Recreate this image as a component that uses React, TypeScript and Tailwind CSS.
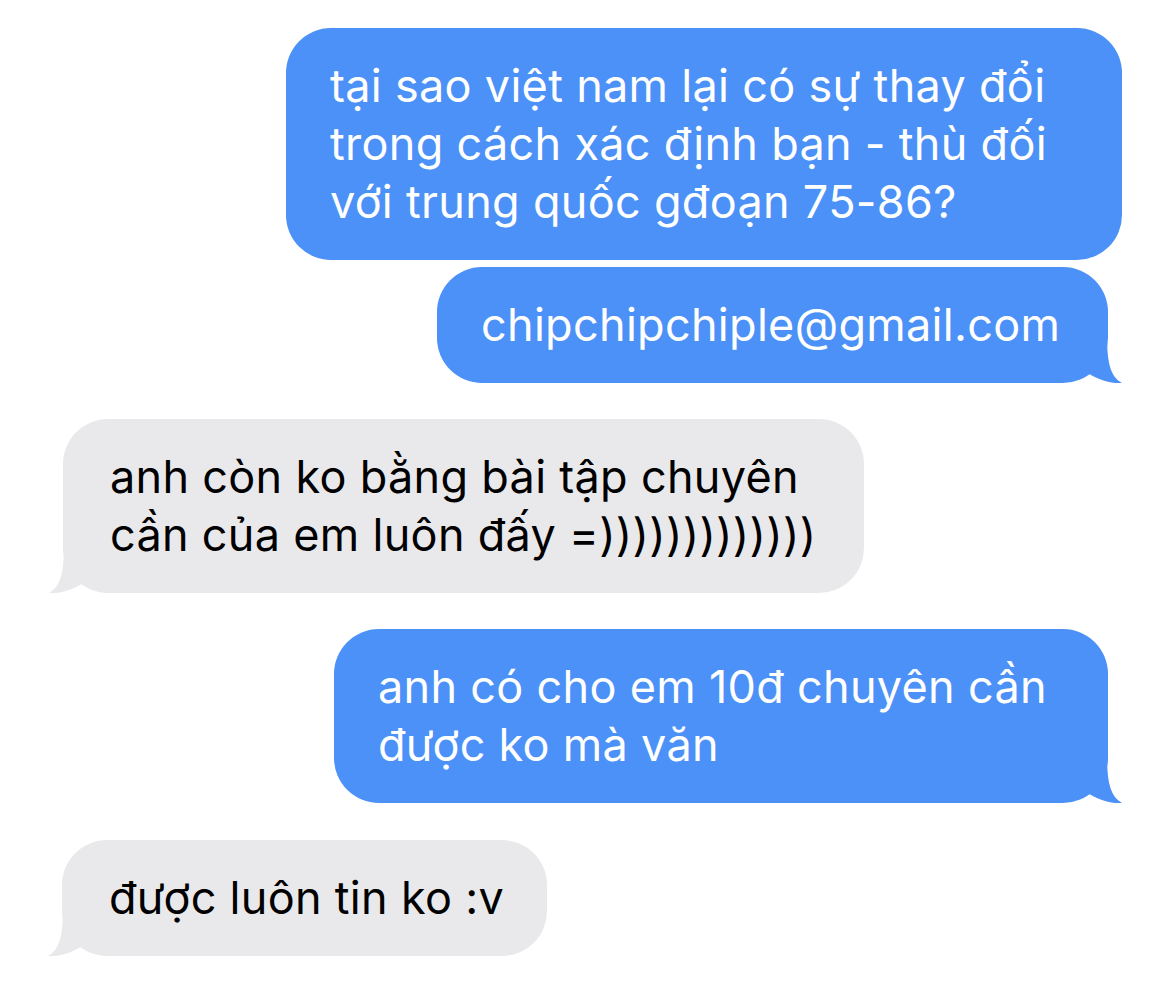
import React from "react";

/* iMessage-style thread: blue = sent (right), grey = received (left).
   Only the last bubble of a run gets the curled tail. */

type Msg = { from: "me" | "them"; lines: string[]; width: string; tail: boolean; gap: string; edge: string };

const MESSAGES: Msg[] = [
  {
    from: "me",
    lines: ["tại sao việt nam lại có sự thay đổi", "trong cách xác định bạn - thù đối", "với trung quốc gđoạn 75-86?"],
    width: "w-[836px]",
    tail: false,
    gap: "mt-0",
    edge: "mr-[48px]",
  },
  { from: "me", lines: ["chipchipchiple@gmail.com"], width: "w-[671px]", tail: true, gap: "mt-[7px]", edge: "mr-[62px]" },
  {
    from: "them",
    lines: ["anh còn ko bằng bài tập chuyên", "cần của em luôn đấy =)))))))))))))"],
    width: "w-[801px]",
    tail: true,
    gap: "mt-[36px]",
    edge: "ml-[63px]",
  },
  {
    from: "me",
    lines: ["anh có cho em 10đ chuyên cần", "được ko mà văn"],
    width: "w-[774px]",
    tail: true,
    gap: "mt-[36px]",
    edge: "mr-[62px]",
  },
  { from: "them", lines: ["được luôn tin ko :v"], width: "w-[485px]", tail: true, gap: "mt-[37px]", edge: "ml-[62px]" },
];

export default function App() {
  return (
    <div
      className="flex min-h-[981px] w-full flex-col bg-white pt-[28px]"
      style={{ fontFamily: "Inter, 'Noto Sans', sans-serif" }}
    >
      {MESSAGES.map((m, i) => (
        <Bubble key={i} msg={m} />
      ))}
    </div>
  );
}

function Bubble({ msg }: { msg: Msg }) {
  const me = msg.from === "me";
  return (
    <div
      className={`relative ${msg.width} ${msg.gap} ${msg.edge} rounded-[45px] py-[29px] pr-[20px] text-[45px] leading-[58px] tracking-[0.3px] whitespace-nowrap ${
        me ? "self-end bg-[#4b91f7] pl-[44px] text-white" : "self-start bg-[#e9e9eb] pl-[47px] text-black"
      }`}
    >
      {msg.lines.map((l, i) => (
        <div key={i}>{l}</div>
      ))}
      {msg.tail && <Tail me={me} />}
    </div>
  );
}

function Tail({ me }: { me: boolean }) {
  return (
    <svg
      width="46"
      height="50"
      viewBox="0 0 46 50"
      aria-hidden
      className={`absolute bottom-0 ${me ? "right-[-15px] fill-[#4b91f7]" : "left-[-15px] -scale-x-100 fill-[#e9e9eb]"}`}
    >
      <path d="M30 0 C30 26 32 43 45 50 C34 51 21 47 9 39 L9 0 Z" />
    </svg>
  );
}
